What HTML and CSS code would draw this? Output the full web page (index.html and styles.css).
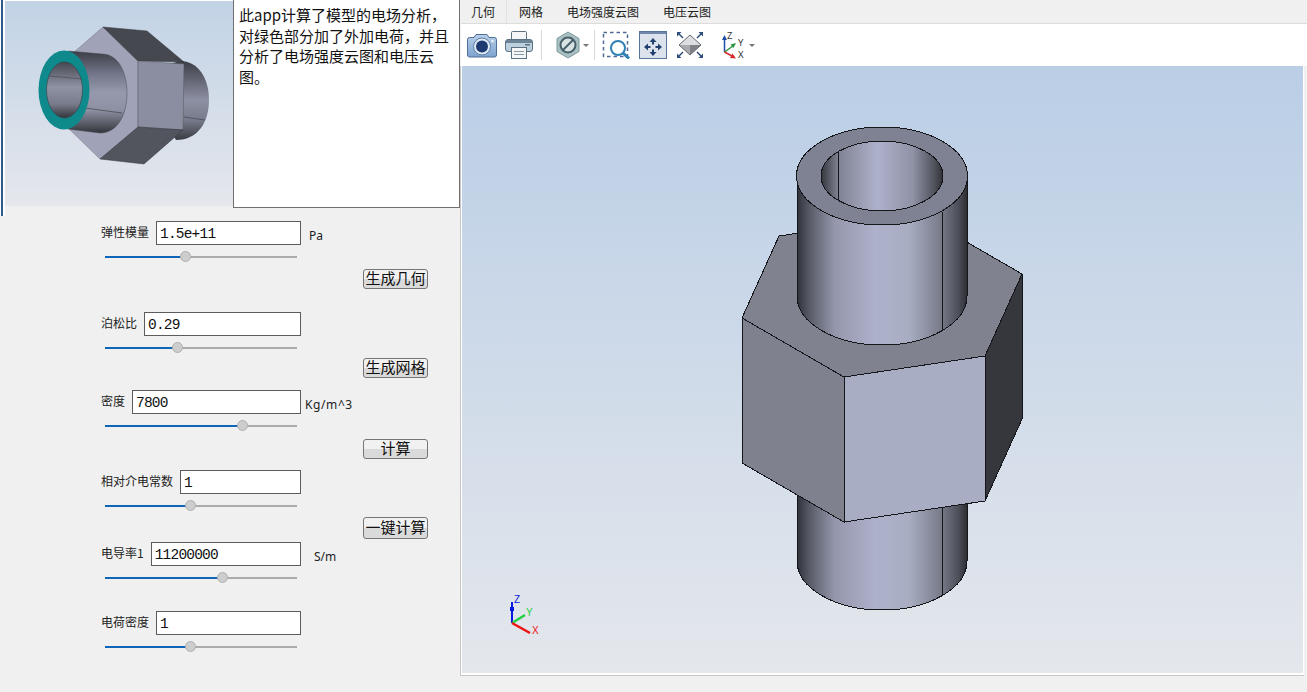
FILE: index.html
```html
<!DOCTYPE html>
<html lang="zh-CN">
<head>
<meta charset="utf-8">
<title>电场分析</title>
<link rel="stylesheet" href="styles.css">
</head>
<body>
<div class="app">
  <div class="edge"></div>
  <main class="left">
    <section class="intro">
      <div class="thumb-pane">
        <svg class="thumb" viewBox="5 1 228 205" aria-label="模型预览">
          <defs>
            <linearGradient id="tubeV" gradientUnits="userSpaceOnUse" x1="0" y1="51" x2="0" y2="133">
              <stop offset="0" stop-color="#3b3d45"/><stop offset=".28" stop-color="#73768a"/><stop offset=".5" stop-color="#9699ab"/><stop offset=".72" stop-color="#8e91a3"/><stop offset="1" stop-color="#33353b"/>
            </linearGradient>
            <linearGradient id="backV" gradientUnits="userSpaceOnUse" x1="0" y1="61" x2="0" y2="140">
              <stop offset="0" stop-color="#3c3e46"/><stop offset=".5" stop-color="#8e91a3"/><stop offset=".75" stop-color="#777a8a"/><stop offset="1" stop-color="#3a3c43"/>
            </linearGradient>
            <linearGradient id="holeV" gradientUnits="userSpaceOnUse" x1="0" y1="62" x2="0" y2="118">
              <stop offset="0" stop-color="#45474f"/><stop offset=".45" stop-color="#9093a5"/><stop offset=".75" stop-color="#787b8b"/><stop offset="1" stop-color="#34363c"/>
            </linearGradient>
          </defs>
          <path d="M180 61 C198 61 209 78 209 100 C209 122 198 140 176 140 L170 130 L170 64 Z" fill="url(#backV)"/>
          <path d="M184 117 L205 120" stroke="#44464e" stroke-width=".7"/>
          <polygon points="103,27 138,61 138,127 100,159 60,120 65,60" fill="#a0a3b8" stroke="#6d6f7d" stroke-width=".5"/>
          <polygon points="103,27 147,31 184,62 138,61" fill="#45484f" stroke="#33343a" stroke-width=".5"/>
          <polygon points="138,61 184,64 183,130 138,127" fill="#8b8ea0" stroke="#55575f" stroke-width=".5"/>
          <polygon points="138,127 183,130 144,164 100,159" fill="#52545e" stroke="#33343a" stroke-width=".5"/>
          <path d="M68 51 L102 54 C118 54 127 72 127 93 C127 114 118 133 100 133 L68 129 Z" fill="url(#tubeV)" stroke="#44464e" stroke-width=".5"/>
          <path d="M85 108 L122 113" stroke="#33343a" stroke-width=".6"/>
          <ellipse cx="64" cy="90" rx="25.5" ry="39.5" fill="#0e8a8c"/>
          <ellipse cx="64.500" cy="90" rx="18" ry="28" fill="url(#holeV)" stroke="#3a3c44" stroke-width=".6"/>
          <path d="M49 76 L82 79" stroke="#44464e" stroke-width=".6"/>
        </svg>
      </div>
      <p class="desc">此app计算了模型的电场分析，对绿色部分加了外加电荷，并且分析了电场强度云图和电压云图。</p>
    </section>

    <form class="params">
      <div class="field">
        <div class="main"><label class="label">弹性模量</label><input class="num" value="1.5e+11"></div><span class="unit unit-pa">Pa</span>
      </div>
      <div class="slider"><span class="fill" style="width:41.7%"></span><span class="knob"></span><span class="rest"></span></div>
      <button type="button" class="btn gap-7">生成几何</button>

      <div class="field gap-23">
        <div class="main"><label class="label">泊松比</label><input class="num" value="0.29"></div>
      </div>
      <div class="slider"><span class="fill" style="width:37.5%"></span><span class="knob"></span><span class="rest"></span></div>
      <button type="button" class="btn gap-5">生成网格</button>

      <div class="field gap-12">
        <div class="main"><label class="label">密度</label><input class="num" value="7800"></div><span class="unit unit-kg">Kg/m^3</span>
      </div>
      <div class="slider"><span class="fill" style="width:71.4%"></span><span class="knob"></span><span class="rest"></span></div>
      <button type="button" class="btn gap-8">计算</button>

      <div class="field gap-11">
        <div class="main"><label class="label">相对介电常数</label><input class="num" value="1"></div>
      </div>
      <div class="slider"><span class="fill" style="width:44.3%"></span><span class="knob"></span><span class="rest"></span></div>
      <button type="button" class="btn btn-tall gap-6">一键计算</button>

      <div class="field gap-3">
        <div class="main"><label class="label">电导率1</label><input class="num" value="11200000"></div><span class="unit unit-sm">S/m</span>
      </div>
      <div class="slider"><span class="fill" style="width:61.2%"></span><span class="knob"></span><span class="rest"></span></div>

      <div class="field gap-28">
        <div class="main"><label class="label">电荷密度</label><input class="num" value="1"></div>
      </div>
      <div class="slider"><span class="fill" style="width:44.3%"></span><span class="knob"></span><span class="rest"></span></div>
    </form>
  </main>

  <section class="right">
    <nav class="tabs">
      <span class="tab tab-active">几何</span><span class="tab">网格</span><span class="tab">电场强度云图</span><span class="tab">电压云图</span>
    </nav>
    <div class="toolbar">
      <svg class="ico ico-camera" viewBox="0 0 30 26">
        <defs><linearGradient id="camB" x1="0" y1="0" x2="0" y2="1"><stop offset="0" stop-color="#b9cfe9"/><stop offset="1" stop-color="#7ea3cf"/></linearGradient></defs>
        <path d="M2.500 5.500 H7 L9 2.500 H20 L22 5.500 H27.500 Q29.500 5.500 29.500 7.500 V23 Q29.500 25 27.500 25 H2.500 Q.5 25 .5 23 V7.500 Q.5 5.500 2.500 5.500 Z" fill="url(#camB)" stroke="#4f6f96"/>
        <circle cx="15" cy="14.500" r="8.500" fill="#dfe9f4" stroke="#5d7ea6"/>
        <circle cx="15" cy="14.500" r="6" fill="#1f3a70"/>
        <circle cx="25.500" cy="9" r="1.200" fill="#f2f6fb"/>
      </svg>
      <svg class="ico ico-printer" viewBox="0 0 28 28">
        <rect x="6.500" y=".5" width="15" height="9" rx="1" fill="#f4f6f8" stroke="#5c7282"/>
        <rect x=".5" y="8.500" width="27" height="12" rx="2.500" fill="#bcd0de" stroke="#5c7282"/>
        <rect x="1" y="9" width="26" height="3" fill="#6d8496"/>
        <rect x="20" y="13" width="5" height="1.500" fill="#5c7282"/>
        <rect x="6.500" y="16.500" width="15" height="11" fill="#f4f6f8" stroke="#5c7282"/>
        <path d="M9 20.500 H19 M9 23.500 H19" stroke="#8a9aa6"/>
      </svg>
      <span class="sep"></span>
      <svg class="ico ico-hex" viewBox="0 0 24 28">
        <polygon points="12,1 23,7.500 23,20.500 12,27 1,20.500 1,7.500" fill="#a9c0c2" stroke="#7d9a9e"/>
        <circle cx="12" cy="14" r="7.500" fill="#d8e2e3" stroke="#46606a" stroke-width="2"/>
        <path d="M7 19 L17 9" stroke="#46606a" stroke-width="2"/>
      </svg>
      <span class="caret"></span>
      <span class="sep sep-b"></span>
      <svg class="ico ico-zoom" viewBox="0 0 28 28">
        <rect x="1.500" y="1.500" width="24" height="24" fill="none" stroke="#4f6a94" stroke-width="1.500" stroke-dasharray="3.500 3"/>
        <circle cx="16" cy="17" r="7" fill="#fff" stroke="#2f80b5" stroke-width="2"/>
        <path d="M21 22 L27 27.500" stroke="#2f80b5" stroke-width="3"/>
      </svg>
      <svg class="ico ico-fit" viewBox="0 0 28 28">
        <rect x=".5" y=".5" width="27" height="27" fill="#dde3ec" stroke="#5a769c"/>
        <rect x="1" y="1" width="26" height="2" fill="#6d88ab"/>
        <path d="M14 7 L10.500 11 H17.500 Z M14 25 L10.500 21 H17.500 Z M5 16 L9 12.500 V19.500 Z M23 16 L19 12.500 V19.500 Z" fill="#22406f"/>
        <path d="M14 11 V13.500 M14 18.500 V21 M9 16 H11.500 M16.500 16 H19" stroke="#22406f" stroke-width="2"/>
      </svg>
      <svg class="ico ico-cube" viewBox="0 0 28 28">
        <polygon points="14,4 25,14 3,14" fill="#dcdde0"/>
        <polygon points="3,14 14,14 14,24" fill="#a9abb0"/>
        <polygon points="25,14 14,14 14,24" fill="#7f8187"/>
        <polygon points="14,4 25,14 14,24 3,14" fill="none" stroke="#666a72"/>
        <path d="M1 1 H5.500 L1 5.500 Z M27 1 H22.500 L27 5.500 Z M1 27 H5.500 L1 22.500 Z M27 27 H22.500 L27 22.500 Z" fill="#2d4d7c"/>
        <path d="M3 3 L7 7 M25 3 L21 7 M3 25 L7 21 M25 25 L21 21" stroke="#2d4d7c" stroke-width="1.500"/>
      </svg>
      <svg class="ico ico-axis" viewBox="0 0 26 28">
        <path d="M2.500 21 V8" stroke="#1f4fa5" stroke-width="1.500"/><path d="M2.500 4 L0 9 H5 Z" fill="#1f4fa5"/>
        <path d="M2.500 21 L11 15" stroke="#2d9440" stroke-width="1.500"/><path d="M14 12 L8.500 13.500 L11.500 17 Z" fill="#2d9440"/>
        <path d="M2.500 21 L10 25" stroke="#d52a2a" stroke-width="1.500"/><path d="M14 27.500 L10.500 22.500 L8 27 Z" fill="#d52a2a"/>
        <text x="5" y="8" class="ax">Z</text><text x="16" y="15" class="ax">Y</text><text x="16" y="27" class="ax">X</text>
      </svg>
      <span class="caret caret-tight"></span>
    </div>
    <div class="view-frame">
      <svg class="scene" viewBox="462 66 841 607" aria-label="三维模型视图">
        <defs>
          <linearGradient id="cyl" gradientUnits="userSpaceOnUse" x1="797" y1="0" x2="967" y2="0">
            <stop offset="0" stop-color="#2e3138"/><stop offset=".07" stop-color="#565964"/><stop offset=".22" stop-color="#9497ab"/><stop offset=".46" stop-color="#aeb1cb"/><stop offset=".66" stop-color="#a8adc2"/><stop offset=".85" stop-color="#777a88"/><stop offset=".95" stop-color="#4c4e58"/><stop offset="1" stop-color="#2d2e34"/>
          </linearGradient>
          <linearGradient id="inner" gradientUnits="userSpaceOnUse" x1="821" y1="0" x2="943" y2="0">
            <stop offset="0" stop-color="#34363c"/><stop offset=".14" stop-color="#7f8292"/><stop offset=".46" stop-color="#aeb1cb"/><stop offset=".75" stop-color="#9093a6"/><stop offset=".93" stop-color="#50525c"/><stop offset="1" stop-color="#2f3036"/>
          </linearGradient>
        </defs>
        <g class="solid" stroke="#15161a" stroke-width="1">
          <path d="M797 480 V561 A85 49 0 0 0 967 561 V480 Z" fill="url(#cyl)"/>
          <path d="M942 500 V596" fill="none"/>
          <polygon points="779,236 742,318 844,377 985,356 1022,274 920,215" fill="#80828f"/>
          <polygon points="742,318 844,377 844,522 742,463" fill="#7f818e"/>
          <polygon points="844,377 985,356 985,501 844,522" fill="#a9adc3"/>
          <polygon points="985,356 1022,274 1022,419 985,501" fill="#36373c"/>
          <path d="M797 177 V296 A85 49 0 0 0 967 296 V177 Z" fill="url(#cyl)"/>
          <path d="M942 212 V331" fill="none"/>
          <ellipse cx="882" cy="176" rx="85.500" ry="49" fill="#7f8292"/>
          <ellipse cx="882" cy="176" rx="61" ry="35" fill="url(#inner)"/>
          <path d="M838 151 V200" fill="none"/>
        </g>
        <g class="triad">
          <path d="M512 623 V606" stroke="#0b18e0" stroke-width="2"/>
          <rect x="510" y="607" width="4" height="4" fill="#0b18e0"/>
          <path d="M512 602 V607" stroke="#0b18e0" stroke-width="2"/>
          <path d="M512 623 L525 615" stroke="#22d040" stroke-width="2.500"/>
          <path d="M512 623 L530 633" stroke="#ee1111" stroke-width="2.500"/>
          <text x="514" y="603" class="tx tx-z">Z</text>
          <text x="526" y="616" class="tx tx-y">Y</text>
          <text x="532" y="634" class="tx tx-x">X</text>
        </g>
      </svg>
    </div>
  </section>
</div>
</body>
</html>
```
FILE: styles.css
```css
* { box-sizing: border-box; }
html, body { margin: 0; height: 100%; overflow: hidden; }
body {
  background: #f0f0f0;
  font-family: "Liberation Sans", "Noto Sans CJK SC", sans-serif;
  color: #111;
}
.app { display: flex; height: 692px; }
.edge {
  width: 5px;
  flex: none;
  background:
    linear-gradient(#2f5b8c, #2f5b8c) 1px 0 / 2px 216px no-repeat,
    linear-gradient(#fdfdfd, #fdfdfd) 0 0 / 5px 216px no-repeat;
}

/* left column */
.left { width: 455px; flex: none; display: flex; flex-direction: column; }
.intro { display: flex; height: 208px; flex: none; }
.thumb-pane { width: 228px; flex: none; padding-top: 1px; height: 206px; background: #fff; }
.thumb {
  display: block;
  width: 228px;
  height: 205px;
  background: linear-gradient(#c2d3e6, #e5e7ec);
}
.desc {
  margin: 0;
  width: 227px;
  flex: none;
  background: #fff;
  border: 1px solid #707070;
  border-top: 0;
  padding: 5px 6px 0 5px;
  font-family: "Noto Sans CJK SC", "Liberation Sans", sans-serif;
  font-size: 15px;
  line-height: 20.5px;
  color: #111;
}

/* parameter form */
.params { padding: 13px 0 0 0; display: flex; flex-direction: column; align-items: flex-start; }
.field { display: flex; margin-left: 96px; align-items: flex-start; }
.main { width: 200px; display: flex; gap: 7px; align-items: center; height: 24px; }
.label {
  font-family: "Noto Sans CJK SC", sans-serif;
  font-size: 12px;
  line-height: 16px;
  color: #222;
  flex: none;
  margin-top: -2px;
}
.num {
  flex: 1;
  min-width: 0;
  width: 0;
  height: 24px;
  border: 1px solid #5c5c5c;
  background: #fff;
  padding: 2px 0 0 3px;
  font-family: "Liberation Mono", monospace;
  font-size: 14.5px;
  letter-spacing: -0.8px;
  color: #111;
  border-radius: 0;
  outline: none;
}
.unit {
  font-family: "Noto Sans", sans-serif;
  font-size: 12px;
  line-height: 16px;
  color: #222;
  margin-top: 7px;
}
.unit-pa { margin-left: 8px; }
.unit-kg { margin-left: 4px; letter-spacing: .6px; }
.unit-sm { margin-left: 13px; }

.slider {
  display: flex;
  align-items: center;
  width: 192px;
  height: 11px;
  margin: 6px 0 0 100px;
}
.fill { height: 2px; background: #0f66b8; flex: none; margin-right: -5.5px; }
.knob {
  width: 11px;
  height: 11px;
  flex: none;
  border-radius: 50%;
  background: #cdcdcd;
  border: 1px solid #b0b0b0;
  position: relative;
  z-index: 1;
}
.rest { flex: 1; height: 2px; background: #ababab; margin-left: -5.5px; }

.btn {
  width: 65px;
  height: 20px;
  margin-left: 358px;
  padding: 0 0 2px;
  border: 1px solid #767676;
  border-radius: 3px;
  background: linear-gradient(#f1f1f1 0 50%, #dadada 50% 100%);
  font-family: "Noto Sans CJK SC", sans-serif;
  font-size: 15px;
  line-height: 16px;
  color: #111;
  overflow: visible;
}
.btn-tall { height: 22px; }
.gap-3 { margin-top: 3px; }
.gap-5 { margin-top: 5px; }
.gap-6 { margin-top: 6px; }
.gap-7 { margin-top: 7px; }
.gap-8 { margin-top: 8px; }
.gap-11 { margin-top: 11px; }
.gap-12 { margin-top: 12px; }
.gap-23 { margin-top: 23px; }
.gap-28 { margin-top: 28px; }

/* right column */
.right { flex: 1; min-width: 0; display: flex; flex-direction: column; height: 676px; }
.tabs {
  height: 24px;
  flex: none;
  display: flex;
  align-items: stretch;
  margin-left: 1px;
  border-bottom: 1px solid #dcdcdc;
  background: #f0f0f0;
  font-family: "Noto Sans CJK SC", sans-serif;
  font-size: 12px;
  line-height: 23px;
  color: #222;
}
.tab { padding: 0 12px; }
.tab-active { padding-left: 10px; border-right: 1px solid #e2e2e2; padding-right: 11px; }
.toolbar {
  height: 42px;
  flex: none;
  margin-left: 1px;
  background: #fff;
  display: flex;
  align-items: center;
  padding-left: 6px;
}
.ico { display: block; flex: none; }
.ico-camera { width: 30px; height: 26px; }
.ico-printer { width: 28px; height: 28px; margin-left: 8px; }
.sep { width: 1px; height: 30px; background: #d8d8d8; margin-left: 8px; flex: none; }
.ico-hex { width: 24px; height: 28px; margin-left: 14px; }
.caret {
  width: 0;
  height: 0;
  margin-left: 3px;
  border-left: 3px solid transparent;
  border-right: 3px solid transparent;
  border-top: 3px solid #777;
  flex: none;
}
.caret-tight { margin-left: 1px; }
.sep-b { margin-left: 5px; }
.ico-zoom { width: 28px; height: 28px; margin-left: 7px; }
.ico-fit { width: 28px; height: 28px; margin-left: 9px; }
.ico-cube { width: 28px; height: 28px; margin-left: 9px; }
.ico-axis { width: 26px; height: 28px; margin-left: 18px; }
.ax { font-family: "Noto Sans", sans-serif; font-size: 9.5px; fill: #333; }

.view-frame {
  flex: 1;
  min-height: 0;
  background: #fff;
  margin-right: 3px;
  border-left: 1px solid #c8c8c8;
  border-bottom: 1px solid #c8c8c8;
  padding: 0 1px 2px 1px;
}
.scene {
  display: block;
  width: 841px;
  height: 607px;
  background: linear-gradient(#bacee6, #e4e7ec);
}
.solid { shape-rendering: crispEdges; }
.tx { font-family: "Liberation Sans", sans-serif; font-size: 10px; }
.tx-z { fill: #0b18e0; }
.tx-y { fill: #22d040; }
.tx-x { fill: #ee1111; }
```
